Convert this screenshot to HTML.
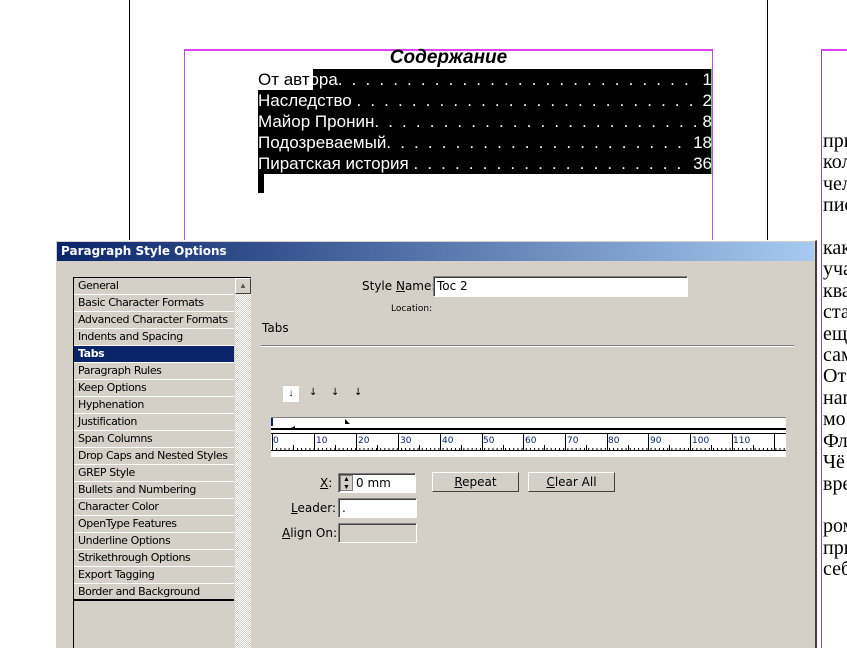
<!DOCTYPE html>
<html><head><meta charset="utf-8"><style>
*{margin:0;padding:0;box-sizing:border-box}
html{overflow:hidden;width:847px;height:648px}
body{width:847px;height:648px;overflow:hidden;background:#fff;position:relative;font-family:"Liberation Sans",sans-serif}
.a{position:absolute}
.toc{position:absolute;left:258px;width:454px;height:21px;font-size:17px;line-height:21px;color:#fff;white-space:nowrap;overflow:hidden;display:flex}
.toc .l{flex:1;overflow:hidden;letter-spacing:2.2px}
.serif{font-family:"Liberation Serif",serif;font-size:20px;line-height:21.4px;color:#000;position:absolute;left:823px;top:131px;white-space:pre}
.dlg{position:absolute;left:55px;top:240px;width:762px;height:408px;overflow:hidden;background:#d4d0c8;border-left:1px solid #fff;border-top:1px solid #fff;border-right:2px solid #404040}
.title{position:absolute;left:1px;top:1px;right:1px;height:19px;background:linear-gradient(to right,#0a246a,#a6caf0);color:#fff;font:bold 12px Tahoma,"DejaVu Sans",sans-serif;line-height:19px;padding-left:4px}
.list{position:absolute;left:17px;top:36px;width:178px;height:380px;border:1px solid #000;background:#d4d0c8}
.list .it{height:17px;border-bottom:1px solid #fff;font:11px "DejaVu Sans",sans-serif;line-height:16px;padding-left:4px;width:160px;color:#000;letter-spacing:-0.4px;white-space:nowrap}
.list .it.sel{background:#0a246a;color:#fff;font-weight:bold}
.sb{position:absolute;left:161px;top:0;width:16px;height:380px;background:repeating-conic-gradient(#fff 0 25%,#d4d0c8 0 50%) 0 0/2px 2px}
.lbl{font:12px "DejaVu Sans",sans-serif;position:absolute;color:#000;white-space:nowrap}
.inp{position:absolute;background:#fff;border:1px solid #808080;border-right-color:#fff;border-bottom-color:#fff;box-shadow:inset 1px 1px #404040;font:12px "DejaVu Sans",sans-serif;line-height:18px;padding-left:3px}
.btn{position:absolute;height:20px;background:#d4d0c8;border:1px solid;border-color:#fff #404040 #404040 #fff;font:12px "DejaVu Sans",sans-serif;text-align:center;line-height:18px}
</style></head><body>
<div class="a" style="left:129px;top:0;width:1px;height:240px;background:#000"></div>
<div class="a" style="left:767px;top:0;width:1px;height:240px;background:#000"></div>
<div class="a" style="left:184px;top:49px;width:529px;height:200px;border:1px solid #b050f0;border-top:2px solid #e040f0;border-bottom:none"></div>
<div class="a" style="left:821px;top:49px;width:26px;height:599px;border-left:1px solid #9040e0;border-top:2px solid #e040f0"></div>
<div class="a" style="left:184px;top:46px;width:529px;text-align:center;font:italic bold 19px 'Liberation Sans',sans-serif;line-height:24px">Содержание</div>
<div class="a" style="left:313px;top:69px;width:399px;height:21px;background:#000"></div>
<div class="a" style="left:258px;top:90px;width:454px;height:84px;background:#000"></div>
<div class="a" style="left:258px;top:174px;width:6px;height:19px;background:#000"></div>
<div class="a" style="left:711px;top:69px;width:1px;height:105px;background:#6c6"></div>
<div class="toc" style="top:69px"><span><span style="color:#000">От авт</span>ора</span><span class="l">. . . . . . . . . . . . . . . . . . . . . . . . . . . . . . . . . . . . . . . . . . . . . . . .</span><span>&nbsp;1</span></div>
<div class="toc" style="top:90px"><span>Наследство&nbsp;</span><span class="l">. . . . . . . . . . . . . . . . . . . . . . . . . . . . . . . . . . . . . . . . . . . . . . . .</span><span>&nbsp;2</span></div>
<div class="toc" style="top:111px"><span>Майор Пронин</span><span class="l">. . . . . . . . . . . . . . . . . . . . . . . . . . . . . . . . . . . . . . . . . . . . . . . .</span><span>&nbsp;8</span></div>
<div class="toc" style="top:132px"><span>Подозреваемый</span><span class="l">. . . . . . . . . . . . . . . . . . . . . . . . . . . . . . . . . . . . . . . . . . . . . . . .</span><span>&nbsp;18</span></div>
<div class="toc" style="top:153px"><span>Пиратская история&nbsp;</span><span class="l">. . . . . . . . . . . . . . . . . . . . . . . . . . . . . . . . . . . . . . . . . . . . . . . .</span><span>&nbsp;36</span></div>
<div class="serif">при
кол
чел
пис

как
уча
ква
ста
ещ
сам
От
нап
мо
Фл
Чё
вре

ром
при
себ</div>

<div class="dlg">
<div class="title">Paragraph Style Options</div>
<div class="list">
<div class="it">General</div><div class="it">Basic Character Formats</div><div class="it">Advanced Character Formats</div><div class="it">Indents and Spacing</div><div class="it sel">Tabs</div><div class="it">Paragraph Rules</div><div class="it">Keep Options</div><div class="it">Hyphenation</div><div class="it">Justification</div><div class="it">Span Columns</div><div class="it">Drop Caps and Nested Styles</div><div class="it">GREP Style</div><div class="it">Bullets and Numbering</div><div class="it">Character Color</div><div class="it">OpenType Features</div><div class="it">Underline Options</div><div class="it">Strikethrough Options</div><div class="it">Export Tagging</div><div class="it" style="border-bottom:2px solid #000">Border and Background</div>
<div class="sb"><div style="width:16px;height:16px;background:#d4d0c8;border:1px solid;border-color:#fff #404040 #404040 #fff;font-size:8px;text-align:center;line-height:13px;color:#555">▲</div></div>
</div>
<div class="lbl" style="left:306px;top:38px">Style <u>N</u>ame:</div>
<div class="inp" style="left:377px;top:35px;width:255px;height:21px">Toc 2</div>
<div class="lbl" style="left:335px;top:63px;font-size:9px">Location:</div>
<div class="lbl" style="left:206px;top:80px">Tabs</div>
<div class="a" style="left:205px;top:104px;width:533px;height:2px;border-top:1px solid #808080;border-bottom:1px solid #fff"></div>
<div class="a" style="left:227px;top:145px;width:16px;height:16px;background:#fff;font-size:10px;text-align:center;line-height:16px">↓</div>
<div class="lbl" style="left:253px;top:146px;font-size:10px">↓</div>
<div class="lbl" style="left:275px;top:146px;font-size:10px">↓</div>
<div class="lbl" style="left:298px;top:146px;font-size:10px">↓</div>
<svg class="a" style="left:215px;top:176px" width="515" height="42">
<rect x="0" y="0" width="515" height="42" fill="#fff"/>
<rect x="0" y="0" width="515" height="1" fill="#808080"/>
<rect x="0" y="11" width="515" height="2" fill="#000"/>
<rect x="0" y="16" width="515" height="1" fill="#000"/>
<rect x="0" y="1" width="2" height="8" fill="#0a246a"/>
<path d="M18 12 L24 9 L24 12Z M74 2 L74 7 L79 7Z" fill="#000"/>
<rect x="0" y="33" width="515" height="1" fill="#000"/>
<rect x="0" y="40" width="515" height="2" fill="#d4d0c8"/>
<g font-family="DejaVu Sans" font-size="9" fill="#0a246a">
<text x="2" y="26">0</text><text x="45" y="26">10</text><text x="87" y="26">20</text><text x="129" y="26">30</text><text x="171" y="26">40</text><text x="212" y="26">50</text><text x="254" y="26">60</text><text x="296" y="26">70</text><text x="337" y="26">80</text><text x="379" y="26">90</text><text x="421" y="26">100</text><text x="462" y="26">110</text></g>
<path d="M1.5 17v17M43.5 17v17M85.5 17v17M127.5 17v17M169.5 17v17M211.5 17v17M252.5 17v17M294.5 17v17M336.5 17v17M377.5 17v17M419.5 17v17M461.5 17v17M503.5 17v17" stroke="#000"/>
<path d="M1 32H515" stroke="#000" stroke-width="2" stroke-dasharray="1 3.16"/>
<path d="M22.5 33V28M64.5 33V28M106.5 33V28M148.5 33V28M190.5 33V28M232.5 33V28M273.5 33V28M315.5 33V28M357.5 33V28M398.5 33V28M440.5 33V28M482.5 33V28" stroke="#000"/>
</svg>
<div class="lbl" style="left:264px;top:235px"><u>X</u>:</div>
<div class="inp" style="left:282px;top:232px;width:78px;height:20px;padding-left:17px">0 mm</div>
<div class="a" style="left:284px;top:234px;width:13px;height:16px;background:#d4d0c8;font-size:7px;line-height:8px;text-align:center;border:1px solid #808080">▲<br>▼</div>
<div class="lbl" style="left:235px;top:260px"><u>L</u>eader:</div>
<div class="inp" style="left:282px;top:257px;width:79px;height:20px">.</div>
<div class="lbl" style="left:226px;top:285px"><u>A</u>lign On:</div>
<div class="inp" style="left:282px;top:282px;width:79px;height:20px;background:#d4d0c8"></div>
<div class="btn" style="left:376px;top:231px;width:87px"><u>R</u>epeat</div>
<div class="btn" style="left:472px;top:231px;width:87px"><u>C</u>lear All</div>
</div>
</body></html>
